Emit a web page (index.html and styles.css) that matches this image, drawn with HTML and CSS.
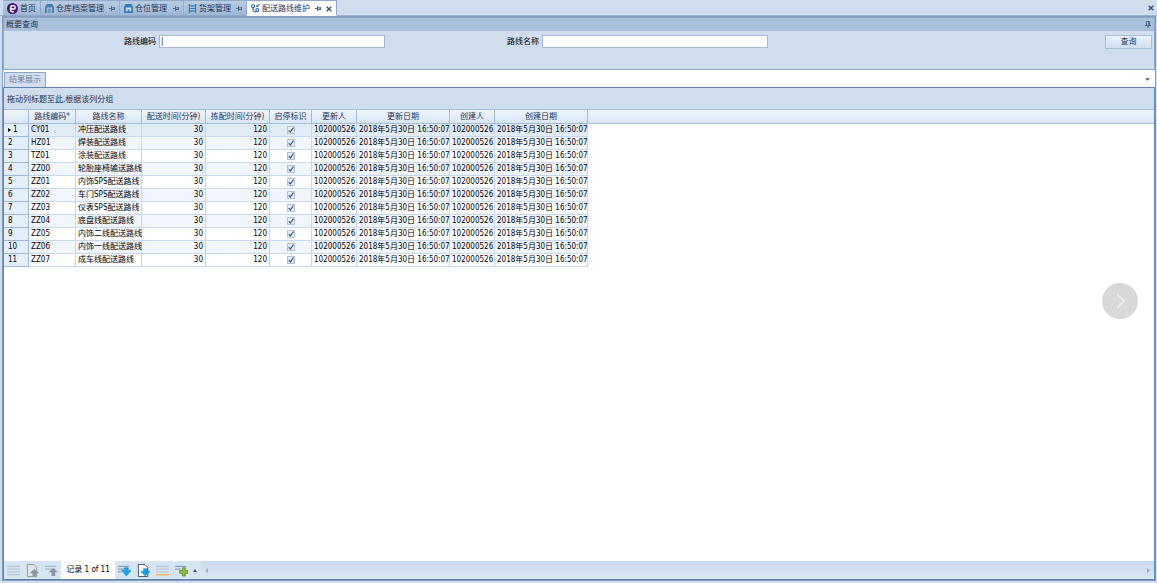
FILE: index.html
```html
<!DOCTYPE html>
<html lang="zh-CN">
<head>
<meta charset="utf-8">
<title>配送路线维护</title>
<link rel="stylesheet" href="styles.css">
</head>
<body>
<svg class="defs" aria-hidden="true">
  <symbol id="pin" viewBox="0 0 6 5"><path d="M0 2h2v1H0zM2 0h1v1h3v3H3v1H2z" fill="currentColor"/><path d="M3 1.700h2v.8H3z" fill="#dbe6f2"/></symbol>
  <symbol id="close" viewBox="0 0 6 6"><path d="M.7 .7l4.6 4.6M5.3 .7L.7 5.3" fill="none" stroke="currentColor" stroke-width="1.4"/></symbol>
  <symbol id="lines" viewBox="0 0 14 14"><path d="M0 2.5h14M0 5.5h14M0 8.5h14M0 11.5h14" stroke="#aebccb"/></symbol>
</svg>
<nav class="tabs">
  <button class="tab home"><svg class="icon-home" viewBox="0 0 12 12"><circle cx="6" cy="6" r="6" fill="#4b1473"/><path d="M3 6.500h4.500q1.500 0 1.500-1.700T7.200 3H5.500Q4 3 4 4.800V8q0 1.500 1.500 1.500h2" fill="none" stroke="#fff" stroke-width="1.500"/></svg>首页</button>
  <button class="tab"><svg class="icon" viewBox="0 0 10 10"><path d="M0 3l2-3h6l2 3v7H8V4H2v6H0z" fill="#477fb2"/><path d="M3 5h4v5H3z" fill="#7096b9"/></svg><span>仓库档案管理</span><svg class="pin"><use href="#pin"/></svg></button>
  <button class="tab"><svg class="icon" viewBox="0 0 10 10"><path d="M0 3l2-3h6l2 3v7H0z" fill="#397db8"/><path d="M2 4h6v4H6V6H4v2H2z" fill="#c6def0"/></svg><span>仓位管理</span><svg class="pin"><use href="#pin"/></svg></button>
  <button class="tab"><svg class="icon" viewBox="0 0 10 10"><path d="M1.5 0v10M8.5 0v10M1 2h8M1 5h8M1 8h8" fill="none" stroke="#397db8" stroke-width="1.3"/></svg><span>货架管理</span><svg class="pin"><use href="#pin"/></svg></button>
  <button class="tab active"><svg class="icon" viewBox="0 0 10 10"><g fill="none" stroke="#2868a0" stroke-width="1.2"><circle cx="2.3" cy="2.5" r="1.7"/><path d="M2.3 4.2v2.6q0 2 2 2t2-2"/><circle cx="7" cy="6.7" r="1.7"/><path d="M5.5 1.5L7 3l2.5-3"/></g></svg><span>配送路线维护</span><svg class="pin"><use href="#pin"/></svg><svg class="close"><use href="#close"/></svg></button>
  <button class="close-all" aria-label="关闭"><svg class="close"><use href="#close"/></svg></button>
</nav>
<main class="window">
  <section class="query">
    <header class="query-title"><span>概要查询</span><svg class="dock" viewBox="0 0 6 7"><path d="M1.5 4V.5h3V4M0 4.5h6M3 5v2M3.8 1v3" fill="none" stroke="#4b638a"/></svg></header>
    <form class="query-form">
      <div class="field"><label for="code">路线编码</label><input id="code" type="text" value="|"></div>
      <div class="field"><label for="name">路线名称</label><input id="name" type="text"></div>
      <button type="button" class="search">查询</button>
    </form>
  </section>
  <div class="result-tabs"><button class="result-tab">结果展示</button><button class="more" aria-label="更多"><svg viewBox="0 0 6 3"><path d="M0 0h6L3 3z" fill="#405a83"/></svg></button></div>
  <section class="grid">
    <div class="group-bar">拖动列标题至此,根据该列分组</div>
    <div class="grid-body">
      <table>
        <colgroup><col class="c-no"><col class="c-code"><col class="c-name"><col class="c-time"><col class="c-time"><col class="c-flag"><col class="c-user"><col class="c-date"><col class="c-user"><col class="c-date"><col></colgroup>
        <thead><tr><th></th><th>路线编码*</th><th>路线名称</th><th>配送时间(分钟)</th><th>拣配时间(分钟)</th><th>启停标识</th><th>更新人</th><th>更新日期</th><th>创建人</th><th>创建日期</th><th></th></tr></thead>
        <tbody id="rows"></tbody>
      </table>
      <button class="next" aria-label="下一个"><svg viewBox="0 0 36 36"><path d="M15 11l7 7-7 7" fill="none" stroke="#f3f3f3" stroke-width="1.2"/></svg></button>
    </div>
    <footer class="navigator">
      <button aria-label="首条"><svg viewBox="0 0 14 14"><use href="#lines"/></svg></button>
      <button aria-label="上一页"><svg viewBox="0 0 14 14"><path d="M1.500 .5h7l3 3v10h-10z" fill="#e2e6ea" stroke="#8a939d"/><path d="M9 5l5 5h-3v3H7v-3H4z" fill="#8f969e"/></svg></button>
      <button aria-label="上一条"><svg viewBox="0 0 14 14"><path d="M0 2.500h12M0 5.500h8" stroke="#9aa7b5"/><path d="M9 4l5 5h-3v4H7V9H4z" fill="#8f969e"/></svg></button>
      <span class="record">记录 1 of 11</span>
      <button aria-label="下一条"><svg viewBox="0 0 14 14"><path d="M0 2.500h12M0 5.500h7M0 8.500h4" stroke="#638caf"/><path d="M7 4h4v3h3l-5 6-5-6h3z" fill="#16a4e8" stroke="#087bc1" stroke-width=".5"/></svg></button>
      <button aria-label="下一页"><svg viewBox="0 0 14 14"><path d="M1.500 .5h7l3 3v10h-10z" fill="#fff" stroke="#384c63"/><path d="M7 5h4v3h3l-5 5-5-5h3z" fill="#16a4e8" stroke="#087bc1" stroke-width=".5"/></svg></button>
      <button aria-label="末条"><svg viewBox="0 0 14 14"><use href="#lines"/><path d="M0 11.500h14" stroke="#f1b54b" stroke-width="1.5"/></svg></button>
      <button aria-label="添加"><svg viewBox="0 0 14 14"><path d="M0 2.500h12M0 5.500h6" stroke="#638caf"/><path d="M8 4h3v3h3v3h-3v3H8v-3H5V7h3z" fill="#8bc53a" stroke="#527f16" stroke-width=".8"/></svg></button>
      <svg class="up" viewBox="0 0 4 3"><path d="M0 3h4L2 0z" fill="#405a83"/></svg>
      <div class="scroll"><svg viewBox="0 0 3 5"><path d="M3 0v5L0 2.500z" fill="#9bafc9"/></svg><svg viewBox="0 0 3 5"><path d="M0 0v5l3-2.500z" fill="#9bafc9"/></svg></div>
    </footer>
  </section>
</main>
<script src="app.js"></script>
</body>
</html>
```

FILE: styles.css
```css
* { box-sizing: border-box; }
body {
  margin: 0;
  height: 100vh;
  display: flex;
  flex-direction: column;
  background: #d0ddee;
  color: #1e3354;
  font: 8px/12px "DejaVu Sans Condensed", "Noto Sans CJK SC", sans-serif;
}
button, input { font: inherit; color: inherit; }
button { border: 0; padding: 0; background: none; display: flex; align-items: center; justify-content: center; }
svg { display: block; flex: none; }
.defs { position: absolute; width: 0; height: 0; }

.tabs { display: flex; height: 16px; padding-left: 3px; background: #d0ddee; border-bottom: 1px solid #9bb3d0; flex: none; }
.tab { height: 16px; width: 64px; padding: 1px 4px 0; justify-content: flex-start; gap: 2px; background: linear-gradient(#b8cce3, #9fb8d6); border: 1px solid #8fa9ca; border-left: 0; white-space: nowrap; }
.tab.home { width: 38px; }
.tab:nth-child(2) { width: 79px; }
.tab:nth-child(4) { width: 63px; }
.tab.active { width: 90px; background: #fff; border-bottom-color: #fff; }
.icon { width: 9px; height: 9px; }
.icon-home { width: 11px; height: 11px; }
.pin { width: 6px; height: 5px; margin-left: auto; color: #53698b; }
.close { width: 6px; height: 6px; color: #344d76; }
.tab .close { margin-left: 3px; }
.close-all { margin-left: auto; margin-right: 3px; }

.window { flex: 1; min-height: 0; display: flex; flex-direction: column; margin: 0 1px 2px 2px; border: 1px solid #829dc0; background: #fff; }
.query { height: 53px; border: 1px solid #8ca5c6; background: #d0ddee; }
.query-title { display: flex; align-items: center; justify-content: space-between; height: 13px; padding: 0 3px 0 2px; background: #a8bfdb; }
.dock { width: 6px; height: 7px; }
.query-form { display: flex; padding: 4px 2px 0 120px; color: #000; }
.field { display: flex; align-items: center; gap: 3px; width: 383px; height: 13px; }
.field label { white-space: nowrap; }
.field input { width: 226px; height: 13px; padding: 0 1px; border: 1px solid #a5b8d3; background: #fff; border-radius: 0; }
.search { width: 47px; height: 14px; margin-left: auto; border: 1px solid #a8bdd8; background: linear-gradient(#edf4fc, #cddff0); color: #1e3354; }

.result-tabs { display: flex; align-items: flex-end; justify-content: space-between; height: 17px; padding-left: 1px; }
.result-tab { width: 42px; height: 15px; border: 1px solid #8ca5c6; border-bottom: 0; background: #d0ddee; color: #71819a; }
.more { width: 16px; height: 15px; }
.more svg { width: 5px; height: 3px; }

.grid { flex: 1; min-height: 0; display: flex; flex-direction: column; border: 1px solid #5e82b4; }
.group-bar { height: 21px; padding: 6px 3px 0; background: #d0ddee; flex: none; }
.grid-body { position: relative; flex: 1; min-height: 0; }
table { width: 100%; table-layout: fixed; border-collapse: separate; border-spacing: 0; color: #000; }
.c-no { width: 25px; }
.c-code { width: 47px; }
.c-name { width: 66px; }
.c-time { width: 64px; }
.c-flag { width: 42px; }
.c-user { width: 45px; }
.c-date { width: 93px; }
th { height: 15px; padding: 0; font-weight: normal; color: #1e3354; background: linear-gradient(#f1f6fd, #d9e6f5); border-style: solid; border-color: #a4bcda; border-width: 1px 1px 1px 0; white-space: nowrap; }
th:last-child { border-right: 0; }
td { height: 13px; padding: 0 2px; line-height: 12px; border-right: 1px solid #c5d8f0; border-bottom: 1px solid #c5d8f0; white-space: nowrap; }
td:last-child { border: 0; }
tr:nth-child(odd) td { background: #fff; }
tr:nth-child(even) td { background: #f1f6fc; }
tr:first-child td { background: #e1ecf7; }
tr td:first-child { background: #e5effa; border-color: #9fb8d8; padding-left: 4px; }
tr td:last-child { background: #fff; }
.current::before { content: ""; display: inline-block; border: 2px solid transparent; border-left: 3px solid #000; border-right: 0; margin-right: 2px; }
.num { text-align: right; }
.flag input { appearance: none; display: block; width: 8px; height: 8px; margin: 0 auto; border: 1px solid #b2c2d7; background: #e5edf7 url("data:image/svg+xml,%3Csvg xmlns='http://www.w3.org/2000/svg' viewBox='0 0 6 6'%3E%3Cpath d='M.7 3l1.600 2L5.500 .5' fill='none' stroke='%23304c75' stroke-width='1.100'/%3E%3C/svg%3E"); }
.next { position: absolute; right: 16px; top: 174px; width: 36px; height: 36px; border-radius: 50%; background: #d8d8d8; }
.next svg { width: 36px; height: 36px; }

.navigator { display: flex; align-items: center; height: 18px; flex: none; background: #d6e4f3; }
.navigator button { width: 19px; height: 18px; }
.navigator button svg { width: 13px; height: 13px; }
.record { width: 54px; height: 18px; line-height: 18px; background: #fff; text-align: center; color: #000; white-space: nowrap; }
.up { width: 4px; height: 3px; margin: 0 4px 0 2px; }
.scroll { flex: 1; height: 18px; display: flex; align-items: center; justify-content: space-between; padding: 0 4px; background: linear-gradient(#c8d9ec, #dbe7f4); }
.scroll svg { width: 3px; height: 5px; }
```

FILE: app.js
```js
const routes = [
  ["CY01", "冲压配送路线"], ["HZ01", "焊装配送路线"], ["TZ01", "涂装配送路线"],
  ["ZZ00", "轮胎座椅输送路线"], ["ZZ01", "内饰SPS配送路线"], ["ZZ02", "车门SPS配送路线"],
  ["ZZ03", "仪表SPS配送路线"], ["ZZ04", "底盘线配送路线"], ["ZZ05", "内饰二线配送路线"],
  ["ZZ06", "内饰一线配送路线"], ["ZZ07", "成车线配送路线"]
];
const user = "102000526";
const date = "2018年5月30日 16:50:07";
document.getElementById("rows").innerHTML = routes.map(([code, name], i) => `
  <tr><td class="${i === 0 ? "current" : ""}">${i + 1}</td><td>${code}</td><td>${name}</td>
  <td class="num">30</td><td class="num">120</td>
  <td class="flag"><input type="checkbox" checked aria-label="${code} 启停标识"></td>
  <td>${user}</td><td>${date}</td><td>${user}</td><td>${date}</td><td></td></tr>`).join("");
```
